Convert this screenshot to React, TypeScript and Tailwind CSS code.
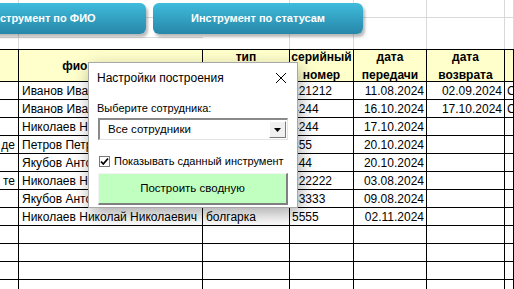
import React from 'react';

type Row = {
  a?: string;
  fio: string;
  tip: string;
  serial: string;
  given: string;
  back?: string;
  status?: string;
};

const rows: Row[] = [
  { fio: 'Иванов Иван Иванович', tip: 'перфоратор', serial: '221212', given: '11.08.2024', back: '02.09.2024', status: 'Сдан' },
  { fio: 'Иванов Иван Иванович', tip: 'шуруповерт', serial: '4244', given: '16.10.2024', back: '17.10.2024', status: 'Сдан' },
  { fio: 'Николаев Николай Николаевич', tip: 'шуруповерт', serial: '4244', given: '17.10.2024' },
  { a: 'де', fio: 'Петров Петр Петрович', tip: 'дрель', serial: '355', given: '20.10.2024' },
  { fio: 'Якубов Антон Викторович', tip: 'лобзик', serial: '444', given: '20.10.2024' },
  { a: 'те', fio: 'Николаев Николай Николаевич', tip: 'перфоратор', serial: '222222', given: '03.08.2024' },
  { fio: 'Якубов Антон Викторович', tip: 'дрель', serial: '33333', given: '09.08.2024' },
  { fio: 'Николаев Николай Николаевич', tip: 'болгарка', serial: '5555', given: '02.11.2024' },
];

const emptyRows = 4;

const light = 'border-r border-[#d9d9d9]';
const cell = 'h-[18px] border-r border-b border-black flex items-center overflow-hidden whitespace-nowrap';
const head =
  'h-[33px] border-t border-b border-r border-black bg-[#ffffcc] flex items-center justify-center text-center font-bold leading-[18px]';

function SheetButton({ label, className }: { label: string; className: string }) {
  return (
    <div
      className={`absolute top-[3px] h-[31px] rounded-[6px] bg-gradient-to-b from-[#40bcdc] to-[#2787a9] shadow-[2px_3px_3px_rgba(0,0,0,0.28)] flex items-center justify-center text-white font-bold text-[11px] whitespace-nowrap ${className}`}
    >
      {label}
    </div>
  );
}

export default function App() {
  return (
    <div className="relative w-[514px] h-[289px] overflow-hidden bg-white text-black font-['Liberation_Sans',Arial,sans-serif]">
      {/* Sheet */}
      <div className="grid grid-cols-[19px_184px_87px_64px_73px_78px_1fr] text-[12px]">
        {/* top rows without borders */}
        {Array.from({ length: 7 }).map((_, i) => (
          <div key={`a${i}`} className={`h-[18px] border-b border-[#d9d9d9] ${i === 1 ? '' : light}`} />
        ))}
        {Array.from({ length: 7 }).map((_, i) => (
          <div key={`b${i}`} className={`h-[31px] ${i === 1 ? '' : light}`}>
            {i < 2 && <div className="h-[20px] border-b border-[#d9d9d9]" />}
          </div>
        ))}

        {/* header */}
        <div className={head} />
        <div className={head}>фио сотрудника</div>
        <div className={head}>тип инструмента</div>
        <div className={head}>серийный номер</div>
        <div className={head}>дата передачи</div>
        <div className={head}>дата возврата</div>
        <div className={head} />

        {rows.map((r, i) => (
          <React.Fragment key={i}>
            <div className={`${cell} justify-end pr-[3px]`}>{r.a}</div>
            <div className={`${cell} pl-[3px]`}>{r.fio}</div>
            <div className={`${cell} pl-[3px]`}>{r.tip}</div>
            <div className={`${cell} pl-[2px]`}>{r.serial}</div>
            <div className={`${cell} justify-end pr-[2px]`}>{r.given}</div>
            <div className={`${cell} justify-end pr-[2px]`}>{r.back}</div>
            <div className={`${cell} pl-[2px]`}>{r.status}</div>
          </React.Fragment>
        ))}
        {Array.from({ length: emptyRows * 7 }).map((_, i) => (
          <div key={`e${i}`} className={cell} />
        ))}
      </div>

      {/* Shapes over the sheet */}
      <SheetButton label="Инструмент по ФИО" className="left-[-65px] w-[211px]" />
      <SheetButton label="Инструмент по статусам" className="left-[153px] w-[210px]" />

      {/* Dialog */}
      <div className="absolute left-[88px] top-[62px] w-[210px] h-[146px] bg-white border border-[#a8a8a8] shadow-[2px_6px_16px_rgba(0,0,0,0.33)] flex flex-col">
        <div className="h-[30px] flex items-center justify-between pl-[8px] pr-[9px] text-[12px]">
          <span>Настройки построения</span>
          <svg width="12" height="12" viewBox="0 0 12 12" className="mr-[1px]">
            <path d="M1 1L11 11M11 1L1 11" stroke="#000" strokeWidth="1" fill="none" />
          </svg>
        </div>
        <div className="px-[9px] flex flex-col text-[11px]">
          <div className="mt-[8px] h-[14px] leading-[14px] -ml-[1px]">Выберите сотрудника:</div>
          <div className="mt-[3px] h-[22px] flex border-t-2 border-l-2 border-[#8a8a8a] border-b border-r border-b-[#e3e3e3] border-r-[#e3e3e3] bg-white">
            <div className="flex-1 flex items-center pl-[8px] text-[11.5px]">Все сотрудники</div>
            <div className="w-[17px] my-[1px] mr-[1px] bg-[#f0f0f0] border border-t-white border-l-white border-b-[#7a7a7a] border-r-[#7a7a7a] flex items-center justify-center">
              <svg width="7" height="4" viewBox="0 0 7 4">
                <path d="M0 0H7L3.5 4Z" fill="#000" />
              </svg>
            </div>
          </div>
          <div className="mt-[15px] h-[13px] flex items-center gap-[4px]">
            <div className="ml-[1px] w-[11px] h-[11px] border border-[#7a7a7a] bg-white flex items-center justify-center">
              <svg width="9" height="9" viewBox="0 0 9 9">
                <path d="M1 4.5L3.3 7L8 1.5" stroke="#000" strokeWidth="1.8" fill="none" />
              </svg>
            </div>
            <span>Показывать сданный инструмент</span>
          </div>
          <div className="mt-[5px] h-[32px] bg-[#c0ffc0] border border-t-[#f4f4f4] border-l-[#f4f4f4] border-b-2 border-r-2 border-b-[#808080] border-r-[#808080] flex items-center justify-center text-[11.5px]">
            Построить сводную
          </div>
        </div>
      </div>
    </div>
  );
}
